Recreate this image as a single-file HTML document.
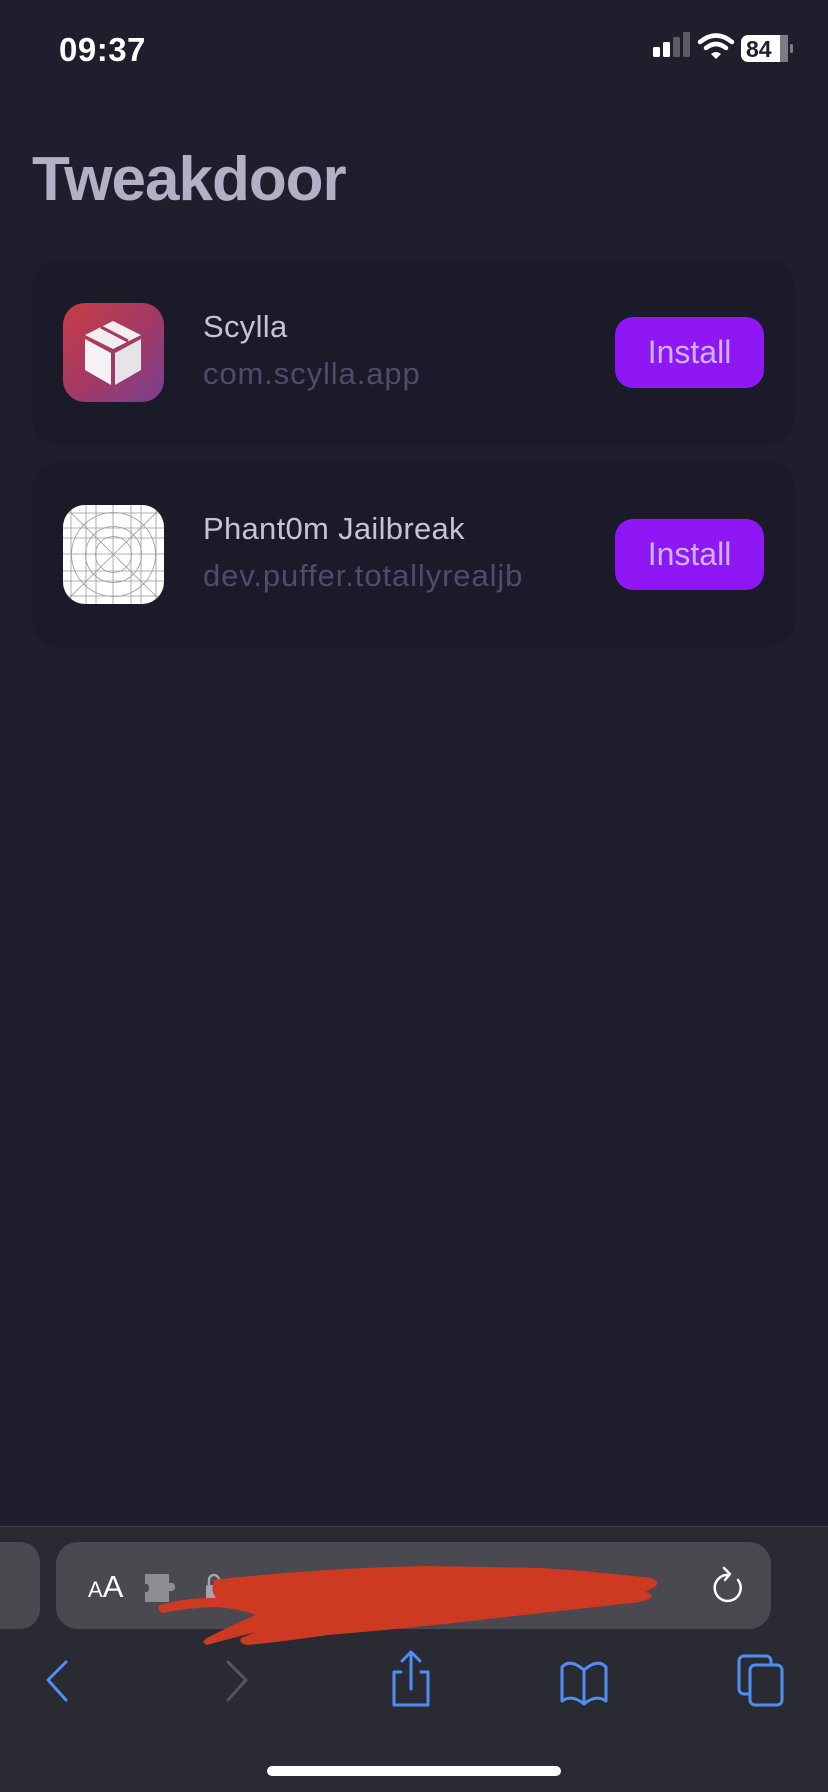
<!DOCTYPE html>
<html><head><meta charset="utf-8"><style>
*{margin:0;padding:0;box-sizing:border-box}
body{width:828px;height:1792px;background:#1f1e2d;font-family:"Liberation Sans",sans-serif;position:relative;overflow:hidden}
.abs{position:absolute}
.time{left:59px;top:31px;font-size:33px;font-weight:bold;color:#fff;letter-spacing:0.5px}
.title{left:32px;top:144px;font-size:62px;font-weight:bold;color:#b3b0c6;letter-spacing:-1px}
.card{left:33px;width:762px;height:185px;background:#1a1a28;border-radius:26px}
.icon{left:30px;top:43px;width:101px;height:99px;border-radius:22px;overflow:hidden}
.name{left:170px;font-size:31px;color:#c6c3d4;letter-spacing:0.3px}
.sub{left:170px;font-size:31px;color:#4f4b6c;letter-spacing:0.9px}
.btn{left:582px;width:149px;height:71px;background:#8f17f5;border-radius:18px;color:#c9b6ee;font-size:32px;text-align:center;line-height:71px}
.tb{left:0;top:1526px;width:828px;height:266px;background:#2a2a32;border-top:1px solid #45444c}
</style></head><body>
<div class="abs time">09:37</div>
<svg class="abs" style="left:650px;top:30px" width="150" height="36" viewBox="0 0 150 36">
<rect x="3" y="17" width="7" height="10" rx="1.5" fill="#fff"/>
<rect x="13" y="12" width="7" height="15" rx="1.5" fill="#fff"/>
<rect x="23" y="7" width="7" height="20" rx="1.5" fill="#5d5c66"/>
<rect x="33" y="2" width="7" height="25" rx="1.5" fill="#5d5c66"/>
<path d="M50 12 Q66 -1 82 12" stroke="#fff" stroke-width="4.5" fill="none" stroke-linecap="round"/>
<path d="M56 18 Q66 10 76 18" stroke="#fff" stroke-width="4.5" fill="none" stroke-linecap="round"/>
<path d="M61 24 L66 29 L71 24 Q66 20 61 24Z" fill="#fff"/>
<rect x="91" y="5" width="47" height="27" rx="7" fill="#fff"/>
<rect x="130" y="5" width="8" height="27" fill="#7d7c85"/>
<rect x="140" y="14" width="3" height="9" rx="1.5" fill="#7d7c85"/>
<text x="96" y="27" font-family="Liberation Sans" font-weight="bold" font-size="23" fill="#1f1e2d">84</text>
</svg>
<div class="abs title">Tweakdoor</div>

<div class="abs card" style="top:260px">
 <div class="abs icon" style="background:linear-gradient(135deg,#c83c45,#a03a66 55%,#7b3f92)">
  <svg width="101" height="99" viewBox="0 0 101 99">
   <path d="M50 18 L78 32 L50 46 L22 32Z" fill="#f0eef0"/>
   <path d="M22 36 L48 50 L48 82 L22 67Z" fill="#f4f2f4"/>
   <path d="M52 50 L78 36 L78 67 L52 82Z" fill="#e6e4e6"/>
   <path d="M38 24 L65 38" stroke="#a53a5e" stroke-width="3"/>
  </svg>
 </div>
 <div class="abs name" style="top:49px">Scylla</div>
 <div class="abs sub" style="top:96px">com.scylla.app</div>
 <div class="abs btn" style="top:57px">Install</div>
</div>

<div class="abs card" style="top:462px">
 <div class="abs icon" style="background:#fff">
  <svg width="101" height="99" viewBox="0 0 101 99" fill="none" stroke="#999" stroke-width="0.8">
   <path d="M0 0L101 99M101 0L0 99"/>
   <path d="M8 0V99M23 0V99M33 0V99M50 0V99M68 0V99M78 0V99M93 0V99"/>
   <path d="M0 8H101M0 23H101M0 33H101M0 49H101M0 66H101M0 76H101M0 91H101"/>
   <circle cx="50.5" cy="49.5" r="42"/><circle cx="50.5" cy="49.5" r="28"/><circle cx="50.5" cy="49.5" r="18"/>
  </svg>
 </div>
 <div class="abs name" style="top:49px">Phant0m Jailbreak</div>
 <div class="abs sub" style="top:96px">dev.puffer.totallyrealjb</div>
 <div class="abs btn" style="top:57px">Install</div>
</div>

<div class="abs tb"></div>
<div class="abs" style="left:-20px;top:1542px;width:60px;height:87px;background:#4a4950;border-radius:20px"></div>
<div class="abs" style="left:56px;top:1542px;width:715px;height:87px;background:#4a4950;border-radius:22px"></div>
<div class="abs" style="left:88px;top:1569px;color:#fff;font-size:31px"><span style="font-size:22px">A</span>A</div>
<svg class="abs" style="left:143px;top:1572px" width="34" height="32" viewBox="0 0 34 32"><path d="M2 2 H26 V11 Q32 10 32 15 Q32 20 26 19 V30 H2 V20 Q6 21 6 16 Q6 11 2 12Z" fill="#8e8d94"/></svg>
<svg class="abs" style="left:204px;top:1573px" width="20" height="28" viewBox="0 0 20 28"><path d="M5 12 V7 A5 5 0 0 1 15 7" stroke="#a5a4aa" stroke-width="2.5" fill="none"/><rect x="2" y="12" width="16" height="14" rx="2" fill="#a5a4aa"/></svg>
<svg class="abs" style="left:0;top:0" width="828" height="1792" viewBox="0 0 828 1792">
<path d="M212 1580 Q320 1568 426 1566 L542 1568 Q600 1572 651 1578 Q660 1582 656 1586 L645 1592 Q654 1594 651 1597 Q649 1600 640 1602 Q550 1612 462 1622 Q390 1630 328 1635 Q280 1642 247 1645 Q238 1643 241 1638 L256 1632 Q225 1640 207 1645 Q200 1642 207 1638 Q232 1625 256 1615 Q236 1608 216 1607 Q185 1608 163 1613 Q155 1609 160 1605 Q190 1597 216 1598 Q210 1590 214 1582Z" fill="#cd3a21"/>
</svg>
<svg class="abs" style="left:705px;top:1564px" width="44" height="46" viewBox="0 0 44 46" fill="none" stroke="#fff" stroke-width="2.5" stroke-linecap="round" stroke-linejoin="round">
<path d="M24 11 A13 13 0 1 0 33 16"/><path d="M19 4 L25 10 L20 16"/>
</svg>
<svg class="abs" style="left:0;top:1650px" width="828" height="62" viewBox="0 0 828 62" fill="none" stroke-width="3" stroke-linecap="round" stroke-linejoin="round">
<path d="M66 12 L48 30 L66 50" stroke="#4f8ef5"/>
<path d="M228 12 L246 30 L228 50" stroke="#55555c"/>
<path d="M401 22 H394 V55 H428 V22 H421 M411 2 V39 M402 11 L411 2 L420 11" stroke="#4f8ef5"/>
<path d="M584 20 Q570 8 562 17 V51 Q572 44 584 54 Q596 44 606 51 V17 Q598 8 584 20 V54" stroke="#4f8ef5"/>
<rect x="739" y="6" width="32" height="38" rx="5" stroke="#4f8ef5"/>
<rect x="750" y="15" width="32" height="40" rx="5" stroke="#4f8ef5" fill="#2a2a32"/>
</svg>
<div class="abs" style="left:267px;top:1766px;width:294px;height:10px;background:#fff;border-radius:5px"></div>
</body></html>
